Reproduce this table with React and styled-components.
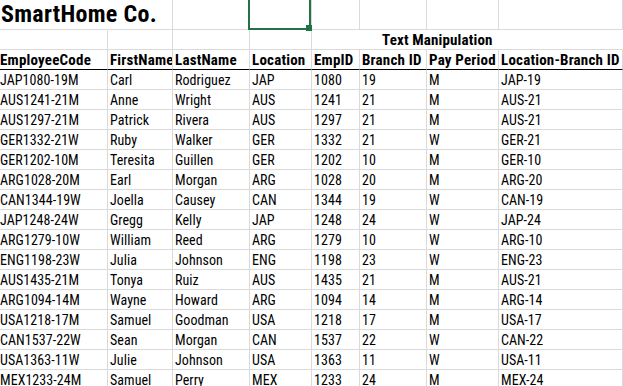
import React from "react";
import styled, { createGlobalStyle } from "styled-components";

const GlobalStyle = createGlobalStyle`
  html, body {
    margin: 0;
    padding: 0;
    background: #ffffff;
    overflow: hidden;
  }
  body {
    font-family: "Roboto Condensed", "Liberation Sans", sans-serif;
    color: #000000;
  }
`;

const GRID = "#dadada";
const EXCEL_GREEN = "#217346";

const Sheet = styled.div`
  display: grid;
  grid-template-columns: 108px 65px 77px 62px 48px 67px 72px 1fr;
  grid-template-rows: 30px 20px 20px;
  grid-auto-rows: 20px;
  width: 623px;
  height: 386px;
  overflow: hidden;
`;

const Cell = styled.div`
  position: relative;
  box-sizing: border-box;
  display: flex;
  align-items: flex-end;
  min-width: 0;
  padding: 0 0 1px ${(p) => (p.$first ? "0" : "2px")};
  border-right: 1px solid ${(p) => (p.$noRight ? "transparent" : GRID)};
  border-bottom: 1px solid ${(p) => (p.$heavy ? "#000000" : GRID)};
  font-size: 14px;
  line-height: 16px;
  letter-spacing: 0.05px;
  white-space: nowrap;
  overflow: ${(p) => (p.$overflow ? "visible" : "hidden")};
  grid-column: ${(p) => p.$span || "auto"};
`;

const HeaderCell = styled(Cell)`
  font-weight: 700;
  font-size: 15px;
  letter-spacing: 0.2px;
`;

const Title = styled.span`
  font-size: 24px;
  line-height: 28px;
  font-weight: 700;
  letter-spacing: 0.3px;
  padding-left: 1px;
  position: relative;
  z-index: 1;
`;

const GroupLabel = styled.span`
  padding-left: 68px;
  font-weight: 700;
  font-size: 15px;
  letter-spacing: 0.15px;
`;

const Selection = styled.div`
  position: absolute;
  top: -2px;
  left: -2px;
  right: 0;
  bottom: -1px;
  border: 2px solid ${EXCEL_GREEN};
  pointer-events: none;
  z-index: 2;
`;

const FillHandle = styled.div`
  position: absolute;
  right: -3px;
  bottom: -3px;
  width: 6px;
  height: 6px;
  background: ${EXCEL_GREEN};
`;

const headers = [
  "EmployeeCode",
  "FirstName",
  "LastName",
  "Location",
  "EmpID",
  "Branch ID",
  "Pay Period",
  "Location-Branch ID",
];

const rows = [
  ["JAP1080-19M", "Carl", "Rodriguez", "JAP", "1080", "19", "M", "JAP-19"],
  ["AUS1241-21M", "Anne", "Wright", "AUS", "1241", "21", "M", "AUS-21"],
  ["AUS1297-21M", "Patrick", "Rivera", "AUS", "1297", "21", "M", "AUS-21"],
  ["GER1332-21W", "Ruby", "Walker", "GER", "1332", "21", "W", "GER-21"],
  ["GER1202-10M", "Teresita", "Guillen", "GER", "1202", "10", "M", "GER-10"],
  ["ARG1028-20M", "Earl", "Morgan", "ARG", "1028", "20", "M", "ARG-20"],
  ["CAN1344-19W", "Joella", "Causey", "CAN", "1344", "19", "W", "CAN-19"],
  ["JAP1248-24W", "Gregg", "Kelly", "JAP", "1248", "24", "W", "JAP-24"],
  ["ARG1279-10W", "William", "Reed", "ARG", "1279", "10", "W", "ARG-10"],
  ["ENG1198-23W", "Julia", "Johnson", "ENG", "1198", "23", "W", "ENG-23"],
  ["AUS1435-21M", "Tonya", "Ruiz", "AUS", "1435", "21", "M", "AUS-21"],
  ["ARG1094-14M", "Wayne", "Howard", "ARG", "1094", "14", "M", "ARG-14"],
  ["USA1218-17M", "Samuel", "Goodman", "USA", "1218", "17", "M", "USA-17"],
  ["CAN1537-22W", "Sean", "Morgan", "CAN", "1537", "22", "W", "CAN-22"],
  ["USA1363-11W", "Julie", "Johnson", "USA", "1363", "11", "W", "USA-11"],
  ["MEX1233-24M", "Samuel", "Perry", "MEX", "1233", "24", "M", "MEX-24"],
];

const App = () => {
  return (
    <>
      <GlobalStyle />
      <Sheet>
        {/* row 1: title + selected cell */}
        <Cell $first $noRight $overflow>
          <Title>SmartHome Co.</Title>
        </Cell>
        <Cell />
        <Cell />
        <Cell $overflow>
          <Selection>
            <FillHandle />
          </Selection>
        </Cell>
        <Cell />
        <Cell />
        <Cell />
        <Cell />

        {/* row 2: group label over E:H */}
        <Cell $first />
        <Cell />
        <Cell />
        <Cell />
        <Cell $span="5 / -1" $noRight $overflow>
          <GroupLabel>Text Manipulation</GroupLabel>
        </Cell>

        {/* row 3: column headers */}
        {headers.map((h, i) => (
          <HeaderCell key={h} $first={i === 0} $heavy>
            {h}
          </HeaderCell>
        ))}

        {rows.map((r) =>
          r.map((v, i) => (
            <Cell key={r[0] + i} $first={i === 0}>
              {v}
            </Cell>
          ))
        )}
      </Sheet>
    </>
  );
};

export default App;
